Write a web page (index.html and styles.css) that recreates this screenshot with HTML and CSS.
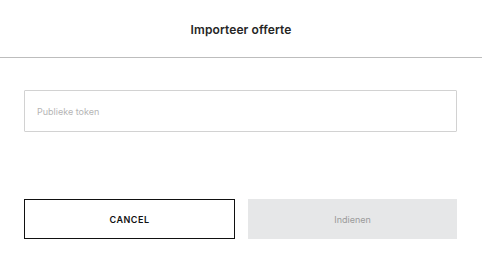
FILE: index.html
```html
<!DOCTYPE html>
<html lang="nl">
<head>
  <meta charset="UTF-8" />
  <meta name="viewport" content="width=device-width, initial-scale=1.0"/>
  <title>Importeer offerte</title>
  <link rel="stylesheet" href="styles.css">
</head>
<body>
  <div class="modal-header">
    <div class="modal-title">Importeer offerte</div>
  </div>

  <div class="modal-body">
    <input type="text" class="token-input" placeholder="Publieke token" />

    <div class="actions">
      <button class="btn-cancel">CANCEL</button>
      <button class="btn-submit" disabled>Indienen</button>
    </div>
  </div>
</body>
</html>
```

FILE: styles.css
```css
body {
  margin: 0;
  background: #fff;
  font-family: Inter, "Noto Sans", Arial, sans-serif;
  color: #222;
}

.modal-header {
  height: 57px;
  border-bottom: 1px solid #bdbdbd;
  display: flex;
  align-items: center;
  justify-content: center;
}

.modal-title {
  font-size: 12px;
  font-weight: 600;
  letter-spacing: 0.1px;
  color: #262626;
  margin-top: 1px;
}

.modal-body {
  padding: 32px 25px 0 24px;
}

.token-input {
  display: block;
  box-sizing: border-box;
  width: 100%;
  height: 42px;
  padding: 0 12px;
  border: 1px solid #d2d2d2;
  border-radius: 1px;
  outline: none;
  font-family: Inter, Arial, sans-serif;
  font-size: 9px;
  color: #333;
}
.token-input::placeholder {
  color: #b5b5b5;
}

.actions {
  display: flex;
  gap: 13px;
  margin-top: 67px;
}

.actions button {
  flex: 1;
  height: 40px;
  box-sizing: border-box;
  font-family: Inter, Arial, sans-serif;
  font-size: 9px;
  cursor: pointer;
}

.btn-cancel {
  background: #fff;
  border: 1px solid #111;
  color: #111;
  font-weight: 600;
  letter-spacing: 0.5px;
}

.btn-submit {
  background: #e6e7e8;
  border: none;
  color: #9a9a9a;
}
```
